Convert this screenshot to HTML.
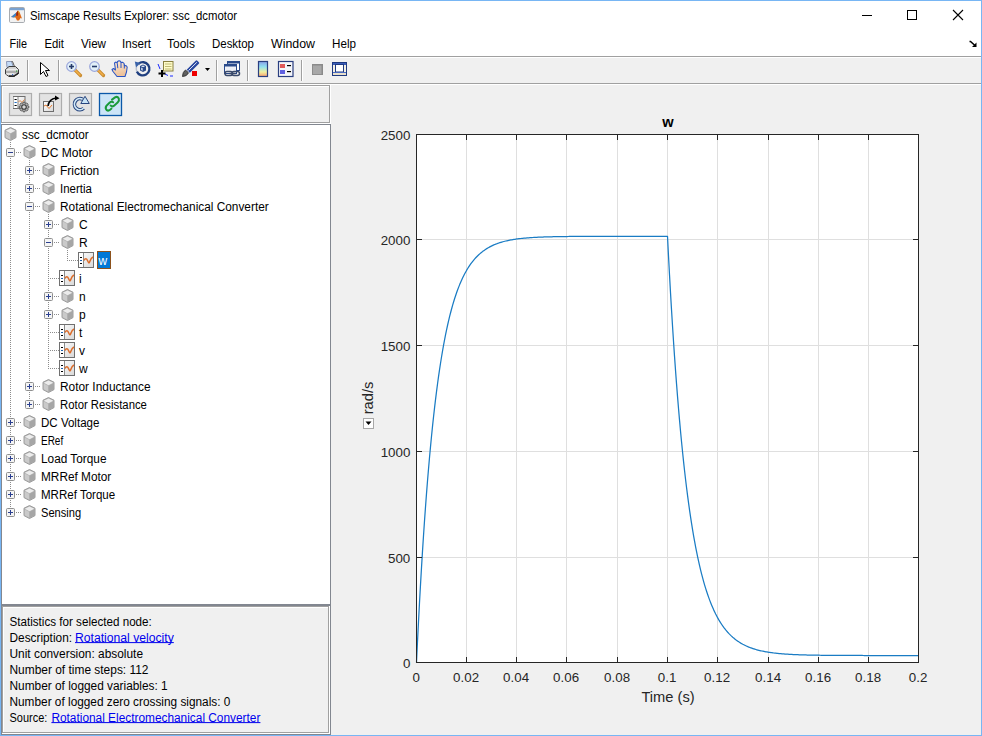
<!DOCTYPE html>
<html><head><meta charset="utf-8"><style>
html,body{margin:0;padding:0;width:982px;height:736px;overflow:hidden;background:#fff;}
svg{display:block;}
text{font-family:"Liberation Sans",sans-serif;}
</style></head><body>
<svg width="982" height="736" viewBox="0 0 982 736">
<rect x="0" y="0" width="982" height="736" fill="#ffffff" />
<g>
<rect x="9.5" y="7.5" width="15" height="15" fill="#f2f2f2" stroke="#a7abb0" stroke-width="1" rx="1.2"/>
<rect x="10" y="8" width="14" height="2.2" fill="#7aa2d0" />
<path d="M11,17 L14.5,14.5 L16.5,12.5 L18,10.5 L19.5,12 L21,16 L22,18.5 L20.5,18 L19,20.5 L17,20.5 L15.5,17.5 Z" fill="#e06a18"/>
<path d="M11,17 L14.5,14 L16.5,12.5 L16,15.5 L14,17.5 Z" fill="#3f86c8"/>
<path d="M16.5,12.5 L18,10.5 L18.8,13.5 L17.5,16 L16,15.5 Z" fill="#a02810"/>
<path d="M18,10.5 L19.3,12 L19,15 L18.5,13 Z" fill="#f6c628"/>
</g>
<text x="30" y="19.7" font-family="Liberation Sans" font-size="12" fill="#000" font-weight="normal" text-anchor="start" textLength="207" lengthAdjust="spacingAndGlyphs" >Simscape Results Explorer: ssc_dcmotor</text>
<rect x="862" y="15" width="10" height="1" fill="#000" />
<rect x="907.5" y="10.5" width="9" height="9" fill="none" stroke="#000" stroke-width="1"/>
<path d="M953,10 L963,20 M963,10 L953,20" stroke="#000" stroke-width="1.1"/>
<text x="9.5" y="48" font-family="Liberation Sans" font-size="12" fill="#000" font-weight="normal" text-anchor="start" textLength="17.5" lengthAdjust="spacingAndGlyphs" >File</text>
<text x="44.5" y="48" font-family="Liberation Sans" font-size="12" fill="#000" font-weight="normal" text-anchor="start" textLength="19.5" lengthAdjust="spacingAndGlyphs" >Edit</text>
<text x="81" y="48" font-family="Liberation Sans" font-size="12" fill="#000" font-weight="normal" text-anchor="start" textLength="25" lengthAdjust="spacingAndGlyphs" >View</text>
<text x="122" y="48" font-family="Liberation Sans" font-size="12" fill="#000" font-weight="normal" text-anchor="start" textLength="29" lengthAdjust="spacingAndGlyphs" >Insert</text>
<text x="167" y="48" font-family="Liberation Sans" font-size="12" fill="#000" font-weight="normal" text-anchor="start" textLength="28" lengthAdjust="spacingAndGlyphs" >Tools</text>
<text x="212" y="48" font-family="Liberation Sans" font-size="12" fill="#000" font-weight="normal" text-anchor="start" textLength="42" lengthAdjust="spacingAndGlyphs" >Desktop</text>
<text x="271" y="48" font-family="Liberation Sans" font-size="12" fill="#000" font-weight="normal" text-anchor="start" textLength="44" lengthAdjust="spacingAndGlyphs" >Window</text>
<text x="332" y="48" font-family="Liberation Sans" font-size="12" fill="#000" font-weight="normal" text-anchor="start" textLength="24" lengthAdjust="spacingAndGlyphs" >Help</text>
<path d="M969.5,41.5 L970.5,41.5 L975,45.5" stroke="#000" stroke-width="1.5" fill="none"/>
<path d="M976.5,42.5 L976.5,47 L972,47 Z" fill="#000"/>
<rect x="1" y="56" width="980" height="1" fill="#a0a0a0" />
<rect x="1" y="57" width="980" height="1" fill="#ffffff" />
<rect x="1" y="58" width="980" height="25" fill="#f0f0f0" />
<rect x="1" y="83" width="980" height="1" fill="#a0a0a0" />
<rect x="1" y="84" width="980" height="1" fill="#ffffff" />
<rect x="27" y="60" width="1" height="21" fill="#a0a0a0" />
<rect x="28" y="60" width="1" height="21" fill="#ffffff" />
<rect x="58" y="60" width="1" height="21" fill="#a0a0a0" />
<rect x="59" y="60" width="1" height="21" fill="#ffffff" />
<rect x="216" y="60" width="1" height="21" fill="#a0a0a0" />
<rect x="217" y="60" width="1" height="21" fill="#ffffff" />
<rect x="247" y="60" width="1" height="21" fill="#a0a0a0" />
<rect x="248" y="60" width="1" height="21" fill="#ffffff" />
<rect x="301" y="60" width="1" height="21" fill="#a0a0a0" />
<rect x="302" y="60" width="1" height="21" fill="#ffffff" />
<g>
<path d="M6.5,61.5 L11.5,61.5 L13.5,67.5 L7,67.5 Z" fill="#c4dcf8" stroke="#8c98b8" stroke-width="1"/>
<path d="M11.5,61.5 L12.5,61.5 L14.5,66.5" stroke="#555" stroke-width="1" fill="none"/>
<path d="M5.5,69.5 L9,66.5 L15.5,66.5 L18.5,69.5 L18.5,73.5 L14,76.5 L9,76.5 L5.5,74 Z" fill="#d2d2d2" stroke="#3c3c3c" stroke-width="1"/>
<path d="M6.5,69.5 L17.5,69.5" stroke="#ececec" stroke-width="1.2"/>
<path d="M6,72 L18,72" stroke="#888" stroke-width="1"/>
<path d="M6.5,74 L14,74" stroke="#f4f4f4" stroke-width="1.2"/>
<path d="M9,76 L14,76 L18.5,73" stroke="#222" stroke-width="1.4" fill="none"/>
<rect x="16" y="70.5" width="1.2" height="1.2" fill="#3aaa3a"/>
<rect x="12" y="74" width="1.2" height="1.2" fill="#3a6ac0"/>
</g>
<path d="M40.5,62.5 L40.5,74.5 L43.5,71.5 L46,76.5 L48,75.5 L45.5,70.5 L49.5,70.5 Z" fill="#fff" stroke="#000" stroke-width="1"/>
<path d="M74.5,69.5 L80.5,75.5" stroke="#c88a2e" stroke-width="3.2" stroke-linecap="round"/>
<path d="M75.0,70 L80.0,75" stroke="#f3b04a" stroke-width="1.4" stroke-linecap="round"/>
<circle cx="71.5" cy="66.5" r="4.8" fill="#e2f0f8" stroke="#9aa6dc" stroke-width="1.2"/>
<path d="M69.0,66.5 L74.0,66.5" stroke="#253a6a" stroke-width="1.6"/>
<path d="M71.5,64 L71.5,69" stroke="#253a6a" stroke-width="1.6"/>
<path d="M97.5,69.5 L103.5,75.5" stroke="#c88a2e" stroke-width="3.2" stroke-linecap="round"/>
<path d="M98.0,70 L103.0,75" stroke="#f3b04a" stroke-width="1.4" stroke-linecap="round"/>
<circle cx="94.5" cy="66.5" r="4.8" fill="#e2f0f8" stroke="#9aa6dc" stroke-width="1.2"/>
<path d="M92.0,66.5 L97.0,66.5" stroke="#253a6a" stroke-width="1.6"/>
<defs><linearGradient id="skin" x1="0" y1="0" x2="0.3" y2="1"><stop offset="0" stop-color="#fdebd8"/><stop offset="1" stop-color="#eec29a"/></linearGradient></defs>
<path d="M117,76.5 L113,71.5 L112,69.5 L113.5,68.5 L115.5,70 L114.5,63 L116,62 L117.2,63.2 L117.5,61.5 L119,60.8 L120.5,61.3 L121,62.5 L122.5,62.2 L124,63.3 L124.5,65.8 L126,65.5 L127.2,67 L126.5,72 L125,76.5 Z" fill="url(#skin)" stroke="#2a55c4" stroke-width="1.05" stroke-linejoin="round"/>
<path d="M117.3,63.5 L117.8,68.2 M121,62.6 L121,68 M124.3,64.5 L124.3,68.5" stroke="#2a55c4" stroke-width="1"/>
<path d="M138.5,63.8 A6.6,6.6 0 1 1 136.8,71.5" fill="none" stroke="#1f3f80" stroke-width="2.3"/>
<path d="M136.8,71.5 A6.6,6.6 0 0 1 136.5,67" fill="none" stroke="#b8c0d0" stroke-width="1.5"/>
<path d="M134.8,61.5 L140.5,63 L136,67.5 Z" fill="#3a62a8"/>
<path d="M140,66 L143,64.5 L146,66 L146,70.5 L143,72 L140,70.5 Z" fill="#2a4a8a"/>
<path d="M141,66.3 L143,65.4 L145,66.3 L143,67.3 Z M141.2,67.5 L142.6,68.2 L142.6,70.8 L141.2,70.1 Z" fill="#dfe8f8"/>
<rect x="163.5" y="61.5" width="9.5" height="9.5" fill="#fffcc8" stroke="#8a8040" stroke-width="1"/>
<path d="M165,64 L171.5,64 M165,66.5 L171.5,66.5 M165,69 L171.5,69" stroke="#b0a860" stroke-width="0.8"/>
<path d="M158,64 L160,69 M165,74 L168,75.5 M170,76 L173,76" stroke="#1a2aff" stroke-width="1" fill="none"/>
<path d="M162,70 L162,77 M158.5,73.5 L165.5,73.5" stroke="#000" stroke-width="2"/>
<path d="M187.5,70.5 L196.5,61.5 L198,63 L189,72" stroke="#2a48a0" stroke-width="2.4" fill="#fff" stroke-linejoin="round"/>
<path d="M188.5,70.5 L196.8,62.3" stroke="#f0f4ff" stroke-width="0.9" fill="none"/>
<path d="M182.5,76.5 Q182.5,72 185.5,70 L188.5,72.8 Q187,76.5 182.5,76.5 Z" fill="#606060" stroke="#303030" stroke-width="0.9"/>
<rect x="192" y="71" width="5" height="5" fill="#ee0000" />
<path d="M205,68 L210,68 L207.5,71 Z" fill="#000"/>
<g>
<rect x="227.5" y="61.5" width="12" height="9" fill="#fff" stroke="#2a4a8a" stroke-width="1"/>
<rect x="227.5" y="61.5" width="12" height="2" fill="#2a4a8a"/>
<rect x="224.5" y="64.5" width="12" height="9" fill="#eef0f6" stroke="#2a4a8a" stroke-width="1"/>
<rect x="224.5" y="64.5" width="12" height="2" fill="#2a4a8a"/>
<rect x="225" y="71.5" width="7.5" height="4" rx="2" fill="none" stroke="#3a4a6a" stroke-width="1.5"/>
<rect x="232" y="71.5" width="7.5" height="4" rx="2" fill="none" stroke="#3a4a6a" stroke-width="1.5"/>
<path d="M229.5,73.5 L235.5,73.5" stroke="#3a4a6a" stroke-width="1.5"/>
</g>
<defs><linearGradient id="cbg" x1="0" y1="0" x2="0" y2="1">
<stop offset="0" stop-color="#8aa0e8"/><stop offset="0.35" stop-color="#90e0f0"/><stop offset="0.7" stop-color="#f0f0a0"/><stop offset="1" stop-color="#f8a070"/></linearGradient>
<linearGradient id="chartg" x1="0" y1="0" x2="1" y2="1"><stop offset="0" stop-color="#ffffff"/><stop offset="1" stop-color="#d8d8d8"/></linearGradient>
<linearGradient id="cubeL" x1="0" y1="0" x2="1" y2="0"><stop offset="0" stop-color="#c8c8c8"/><stop offset="1" stop-color="#b8b8b8"/></linearGradient>
</defs>
<rect x="258.5" y="61.5" width="9" height="15" fill="url(#cbg)" stroke="#2a3f80" stroke-width="1.2"/>
<rect x="278.5" y="61.5" width="14.5" height="15" fill="#f4f6fa" stroke="#2a3f80" stroke-width="1.2"/>
<rect x="280" y="64" width="5" height="4" fill="#e05a5a" />
<rect x="280" y="70" width="5" height="4" fill="#6060e0" />
<rect x="287" y="65" width="4" height="1.2" fill="#000" />
<rect x="287" y="71" width="4" height="1.2" fill="#000" />
<rect x="312.5" y="64.5" width="10" height="10" fill="#a8a8a8" stroke="#8c8c8c" stroke-width="1"/>
<rect x="313" y="64" width="10" height="1.5" fill="#8a8a8a" />
<rect x="321.5" y="64" width="1.5" height="10.5" fill="#8a8a8a" />
<rect x="332.5" y="62.5" width="14" height="13" fill="#f4f0e4" stroke="#1f3a80" stroke-width="1"/>
<rect x="333" y="63" width="13" height="2" fill="#3d5eb8" />
<rect x="335.5" y="64.5" width="8" height="7.5" fill="#fff" stroke="#1f3a80" stroke-width="1"/>
<rect x="333" y="72" width="13" height="1" fill="#4a6ac0" />
<rect x="333" y="73" width="13" height="2" fill="#e8e0cc" />
<rect x="1" y="85" width="329" height="38" fill="#f0f0f0" />
<rect x="1" y="85" width="329" height="1" fill="#a0a0a0" />
<rect x="1" y="85" width="1" height="38" fill="#a0a0a0" />
<rect x="329" y="85" width="1" height="38" fill="#a0a0a0" />
<rect x="1" y="122" width="329" height="1" fill="#a0a0a0" />
<rect x="2" y="86" width="327" height="1" fill="#ffffff" />
<rect x="2" y="86" width="1" height="36" fill="#ffffff" />
<rect x="330" y="85" width="1" height="39" fill="#ffffff" />
<rect x="1" y="123" width="330" height="1" fill="#ffffff" />
<rect x="331" y="85" width="650" height="650" fill="#f0f0f0" />
<rect x="9.5" y="93.5" width="22" height="22" fill="#e3e3e3" stroke="#adadad" stroke-width="1.2"/>
<rect x="39.5" y="93.5" width="22" height="22" fill="#e3e3e3" stroke="#adadad" stroke-width="1.2"/>
<rect x="69.5" y="93.5" width="22" height="22" fill="#e3e3e3" stroke="#adadad" stroke-width="1.2"/>
<rect x="99.5" y="93.5" width="22" height="22" fill="#cce4f7" stroke="#0a58a8" stroke-width="1.3"/>
<rect x="13.5" y="96.5" width="11.5" height="12" fill="url(#chartg)" stroke="#6e6e6e" stroke-width="1"/>
<rect x="13.5" y="97" width="4" height="11" fill="#ffffff" />
<rect x="17.5" y="97" width="1" height="11.5" fill="#8a8a8a" />
<rect x="14.5" y="99" width="2.2" height="1" fill="#000" />
<rect x="14.5" y="102" width="2.2" height="1" fill="#1a6ac0" />
<rect x="14.5" y="105" width="2.2" height="1" fill="#000" />
<path d="M18.5,102 L20,100.5 L22,102.5 L24.5,99.5" stroke="#e07a30" stroke-width="0.9" fill="none"/>
<polygon points="27.51,105.84 28.80,106.03 28.80,107.97 27.51,108.16 27.31,108.66 28.08,109.71 26.71,111.08 25.66,110.31 25.16,110.51 24.97,111.80 23.03,111.80 22.84,110.51 22.34,110.31 21.29,111.08 19.92,109.71 20.69,108.66 20.49,108.16 19.20,107.97 19.20,106.03 20.49,105.84 20.69,105.34 19.92,104.29 21.29,102.92 22.34,103.69 22.84,103.49 23.03,102.20 24.97,102.20 25.16,103.49 25.66,103.69 26.71,102.92 28.08,104.29 27.31,105.34" fill="#b4b4b4" stroke="#505050" stroke-width="0.9" stroke-linejoin="round"/>
<circle cx="24" cy="107" r="2.3" fill="#d8d8d8" stroke="#3a3a3a" stroke-width="1.1"/>
<rect x="43.5" y="101.5" width="10" height="10" fill="url(#chartg)" stroke="#6e6e6e" stroke-width="1"/>
<path d="M44,106 L46,105 L49,108.5 L52,105" stroke="#e07a30" stroke-width="1" fill="none"/>
<path d="M48,106 Q49,99 56,98" stroke="#000" stroke-width="1.6" fill="none"/>
<path d="M55,95.5 L59.5,98.3 L55,100.5 Z" fill="#000"/>
<path d="M82.6,99.3 A5.4,5.6 0 1 0 83.6,108.2" fill="none" stroke="#27457e" stroke-width="3.6"/>
<path d="M82.6,99.3 A5.4,5.6 0 1 0 83.6,108.2" fill="none" stroke="#d2eaf8" stroke-width="1.7"/>
<path d="M85,96.3 L89.3,103.5 L80.8,103.5 Z" fill="#c8e4f6" stroke="#27457e" stroke-width="1" stroke-linejoin="round"/>
<path d="M112,99.6 L115,97.4 Q117.4,96 118.8,98.4 Q119.6,100.4 117.6,102.6 L113.8,105.9 Q112.2,107 110.6,105.6" stroke="#1a9a3a" stroke-width="2" fill="none" stroke-linecap="round"/>
<path d="M113.2,102.3 Q111.5,100.9 109.5,102.7 L106.4,105.9 Q104.8,108.4 106.8,110.2 Q108.8,111.5 111.4,108.6" stroke="#1a9a3a" stroke-width="2" fill="none" stroke-linecap="round"/>
<rect x="1" y="124" width="330" height="611" fill="#828790" />
<rect x="2" y="125" width="328" height="479" fill="#ffffff" />
<rect x="2" y="606" width="327" height="128" fill="#f0f0f0" />
<rect x="2" y="606" width="327" height="1" fill="#a0a0a0" />
<rect x="2" y="606" width="1" height="127" fill="#a0a0a0" />
<rect x="328" y="606" width="1" height="127" fill="#a0a0a0" />
<rect x="2" y="732" width="327" height="1" fill="#a0a0a0" />
<rect x="3" y="607" width="325" height="1" fill="#ffffff" />
<rect x="3" y="607" width="1" height="125" fill="#ffffff" />
<rect x="329" y="606" width="1" height="128" fill="#ffffff" />
<rect x="2" y="733" width="328" height="1" fill="#ffffff" />
<rect x="10" y="142" width="1" height="1" fill="#8c8c8c" />
<rect x="10" y="144" width="1" height="1" fill="#8c8c8c" />
<rect x="10" y="146" width="1" height="1" fill="#8c8c8c" />
<rect x="10" y="148" width="1" height="1" fill="#8c8c8c" />
<rect x="10" y="150" width="1" height="1" fill="#8c8c8c" />
<rect x="10" y="152" width="1" height="1" fill="#8c8c8c" />
<rect x="10" y="154" width="1" height="1" fill="#8c8c8c" />
<rect x="10" y="156" width="1" height="1" fill="#8c8c8c" />
<rect x="10" y="158" width="1" height="1" fill="#8c8c8c" />
<rect x="10" y="160" width="1" height="1" fill="#8c8c8c" />
<rect x="10" y="162" width="1" height="1" fill="#8c8c8c" />
<rect x="10" y="164" width="1" height="1" fill="#8c8c8c" />
<rect x="10" y="166" width="1" height="1" fill="#8c8c8c" />
<rect x="10" y="168" width="1" height="1" fill="#8c8c8c" />
<rect x="10" y="170" width="1" height="1" fill="#8c8c8c" />
<rect x="10" y="172" width="1" height="1" fill="#8c8c8c" />
<rect x="10" y="174" width="1" height="1" fill="#8c8c8c" />
<rect x="10" y="176" width="1" height="1" fill="#8c8c8c" />
<rect x="10" y="178" width="1" height="1" fill="#8c8c8c" />
<rect x="10" y="180" width="1" height="1" fill="#8c8c8c" />
<rect x="10" y="182" width="1" height="1" fill="#8c8c8c" />
<rect x="10" y="184" width="1" height="1" fill="#8c8c8c" />
<rect x="10" y="186" width="1" height="1" fill="#8c8c8c" />
<rect x="10" y="188" width="1" height="1" fill="#8c8c8c" />
<rect x="10" y="190" width="1" height="1" fill="#8c8c8c" />
<rect x="10" y="192" width="1" height="1" fill="#8c8c8c" />
<rect x="10" y="194" width="1" height="1" fill="#8c8c8c" />
<rect x="10" y="196" width="1" height="1" fill="#8c8c8c" />
<rect x="10" y="198" width="1" height="1" fill="#8c8c8c" />
<rect x="10" y="200" width="1" height="1" fill="#8c8c8c" />
<rect x="10" y="202" width="1" height="1" fill="#8c8c8c" />
<rect x="10" y="204" width="1" height="1" fill="#8c8c8c" />
<rect x="10" y="206" width="1" height="1" fill="#8c8c8c" />
<rect x="10" y="208" width="1" height="1" fill="#8c8c8c" />
<rect x="10" y="210" width="1" height="1" fill="#8c8c8c" />
<rect x="10" y="212" width="1" height="1" fill="#8c8c8c" />
<rect x="10" y="214" width="1" height="1" fill="#8c8c8c" />
<rect x="10" y="216" width="1" height="1" fill="#8c8c8c" />
<rect x="10" y="218" width="1" height="1" fill="#8c8c8c" />
<rect x="10" y="220" width="1" height="1" fill="#8c8c8c" />
<rect x="10" y="222" width="1" height="1" fill="#8c8c8c" />
<rect x="10" y="224" width="1" height="1" fill="#8c8c8c" />
<rect x="10" y="226" width="1" height="1" fill="#8c8c8c" />
<rect x="10" y="228" width="1" height="1" fill="#8c8c8c" />
<rect x="10" y="230" width="1" height="1" fill="#8c8c8c" />
<rect x="10" y="232" width="1" height="1" fill="#8c8c8c" />
<rect x="10" y="234" width="1" height="1" fill="#8c8c8c" />
<rect x="10" y="236" width="1" height="1" fill="#8c8c8c" />
<rect x="10" y="238" width="1" height="1" fill="#8c8c8c" />
<rect x="10" y="240" width="1" height="1" fill="#8c8c8c" />
<rect x="10" y="242" width="1" height="1" fill="#8c8c8c" />
<rect x="10" y="244" width="1" height="1" fill="#8c8c8c" />
<rect x="10" y="246" width="1" height="1" fill="#8c8c8c" />
<rect x="10" y="248" width="1" height="1" fill="#8c8c8c" />
<rect x="10" y="250" width="1" height="1" fill="#8c8c8c" />
<rect x="10" y="252" width="1" height="1" fill="#8c8c8c" />
<rect x="10" y="254" width="1" height="1" fill="#8c8c8c" />
<rect x="10" y="256" width="1" height="1" fill="#8c8c8c" />
<rect x="10" y="258" width="1" height="1" fill="#8c8c8c" />
<rect x="10" y="260" width="1" height="1" fill="#8c8c8c" />
<rect x="10" y="262" width="1" height="1" fill="#8c8c8c" />
<rect x="10" y="264" width="1" height="1" fill="#8c8c8c" />
<rect x="10" y="266" width="1" height="1" fill="#8c8c8c" />
<rect x="10" y="268" width="1" height="1" fill="#8c8c8c" />
<rect x="10" y="270" width="1" height="1" fill="#8c8c8c" />
<rect x="10" y="272" width="1" height="1" fill="#8c8c8c" />
<rect x="10" y="274" width="1" height="1" fill="#8c8c8c" />
<rect x="10" y="276" width="1" height="1" fill="#8c8c8c" />
<rect x="10" y="278" width="1" height="1" fill="#8c8c8c" />
<rect x="10" y="280" width="1" height="1" fill="#8c8c8c" />
<rect x="10" y="282" width="1" height="1" fill="#8c8c8c" />
<rect x="10" y="284" width="1" height="1" fill="#8c8c8c" />
<rect x="10" y="286" width="1" height="1" fill="#8c8c8c" />
<rect x="10" y="288" width="1" height="1" fill="#8c8c8c" />
<rect x="10" y="290" width="1" height="1" fill="#8c8c8c" />
<rect x="10" y="292" width="1" height="1" fill="#8c8c8c" />
<rect x="10" y="294" width="1" height="1" fill="#8c8c8c" />
<rect x="10" y="296" width="1" height="1" fill="#8c8c8c" />
<rect x="10" y="298" width="1" height="1" fill="#8c8c8c" />
<rect x="10" y="300" width="1" height="1" fill="#8c8c8c" />
<rect x="10" y="302" width="1" height="1" fill="#8c8c8c" />
<rect x="10" y="304" width="1" height="1" fill="#8c8c8c" />
<rect x="10" y="306" width="1" height="1" fill="#8c8c8c" />
<rect x="10" y="308" width="1" height="1" fill="#8c8c8c" />
<rect x="10" y="310" width="1" height="1" fill="#8c8c8c" />
<rect x="10" y="312" width="1" height="1" fill="#8c8c8c" />
<rect x="10" y="314" width="1" height="1" fill="#8c8c8c" />
<rect x="10" y="316" width="1" height="1" fill="#8c8c8c" />
<rect x="10" y="318" width="1" height="1" fill="#8c8c8c" />
<rect x="10" y="320" width="1" height="1" fill="#8c8c8c" />
<rect x="10" y="322" width="1" height="1" fill="#8c8c8c" />
<rect x="10" y="324" width="1" height="1" fill="#8c8c8c" />
<rect x="10" y="326" width="1" height="1" fill="#8c8c8c" />
<rect x="10" y="328" width="1" height="1" fill="#8c8c8c" />
<rect x="10" y="330" width="1" height="1" fill="#8c8c8c" />
<rect x="10" y="332" width="1" height="1" fill="#8c8c8c" />
<rect x="10" y="334" width="1" height="1" fill="#8c8c8c" />
<rect x="10" y="336" width="1" height="1" fill="#8c8c8c" />
<rect x="10" y="338" width="1" height="1" fill="#8c8c8c" />
<rect x="10" y="340" width="1" height="1" fill="#8c8c8c" />
<rect x="10" y="342" width="1" height="1" fill="#8c8c8c" />
<rect x="10" y="344" width="1" height="1" fill="#8c8c8c" />
<rect x="10" y="346" width="1" height="1" fill="#8c8c8c" />
<rect x="10" y="348" width="1" height="1" fill="#8c8c8c" />
<rect x="10" y="350" width="1" height="1" fill="#8c8c8c" />
<rect x="10" y="352" width="1" height="1" fill="#8c8c8c" />
<rect x="10" y="354" width="1" height="1" fill="#8c8c8c" />
<rect x="10" y="356" width="1" height="1" fill="#8c8c8c" />
<rect x="10" y="358" width="1" height="1" fill="#8c8c8c" />
<rect x="10" y="360" width="1" height="1" fill="#8c8c8c" />
<rect x="10" y="362" width="1" height="1" fill="#8c8c8c" />
<rect x="10" y="364" width="1" height="1" fill="#8c8c8c" />
<rect x="10" y="366" width="1" height="1" fill="#8c8c8c" />
<rect x="10" y="368" width="1" height="1" fill="#8c8c8c" />
<rect x="10" y="370" width="1" height="1" fill="#8c8c8c" />
<rect x="10" y="372" width="1" height="1" fill="#8c8c8c" />
<rect x="10" y="374" width="1" height="1" fill="#8c8c8c" />
<rect x="10" y="376" width="1" height="1" fill="#8c8c8c" />
<rect x="10" y="378" width="1" height="1" fill="#8c8c8c" />
<rect x="10" y="380" width="1" height="1" fill="#8c8c8c" />
<rect x="10" y="382" width="1" height="1" fill="#8c8c8c" />
<rect x="10" y="384" width="1" height="1" fill="#8c8c8c" />
<rect x="10" y="386" width="1" height="1" fill="#8c8c8c" />
<rect x="10" y="388" width="1" height="1" fill="#8c8c8c" />
<rect x="10" y="390" width="1" height="1" fill="#8c8c8c" />
<rect x="10" y="392" width="1" height="1" fill="#8c8c8c" />
<rect x="10" y="394" width="1" height="1" fill="#8c8c8c" />
<rect x="10" y="396" width="1" height="1" fill="#8c8c8c" />
<rect x="10" y="398" width="1" height="1" fill="#8c8c8c" />
<rect x="10" y="400" width="1" height="1" fill="#8c8c8c" />
<rect x="10" y="402" width="1" height="1" fill="#8c8c8c" />
<rect x="10" y="404" width="1" height="1" fill="#8c8c8c" />
<rect x="10" y="406" width="1" height="1" fill="#8c8c8c" />
<rect x="10" y="408" width="1" height="1" fill="#8c8c8c" />
<rect x="10" y="410" width="1" height="1" fill="#8c8c8c" />
<rect x="10" y="412" width="1" height="1" fill="#8c8c8c" />
<rect x="10" y="414" width="1" height="1" fill="#8c8c8c" />
<rect x="10" y="416" width="1" height="1" fill="#8c8c8c" />
<rect x="10" y="418" width="1" height="1" fill="#8c8c8c" />
<rect x="10" y="420" width="1" height="1" fill="#8c8c8c" />
<rect x="10" y="422" width="1" height="1" fill="#8c8c8c" />
<rect x="10" y="424" width="1" height="1" fill="#8c8c8c" />
<rect x="10" y="426" width="1" height="1" fill="#8c8c8c" />
<rect x="10" y="428" width="1" height="1" fill="#8c8c8c" />
<rect x="10" y="430" width="1" height="1" fill="#8c8c8c" />
<rect x="10" y="432" width="1" height="1" fill="#8c8c8c" />
<rect x="10" y="434" width="1" height="1" fill="#8c8c8c" />
<rect x="10" y="436" width="1" height="1" fill="#8c8c8c" />
<rect x="10" y="438" width="1" height="1" fill="#8c8c8c" />
<rect x="10" y="440" width="1" height="1" fill="#8c8c8c" />
<rect x="10" y="442" width="1" height="1" fill="#8c8c8c" />
<rect x="10" y="444" width="1" height="1" fill="#8c8c8c" />
<rect x="10" y="446" width="1" height="1" fill="#8c8c8c" />
<rect x="10" y="448" width="1" height="1" fill="#8c8c8c" />
<rect x="10" y="450" width="1" height="1" fill="#8c8c8c" />
<rect x="10" y="452" width="1" height="1" fill="#8c8c8c" />
<rect x="10" y="454" width="1" height="1" fill="#8c8c8c" />
<rect x="10" y="456" width="1" height="1" fill="#8c8c8c" />
<rect x="10" y="458" width="1" height="1" fill="#8c8c8c" />
<rect x="10" y="460" width="1" height="1" fill="#8c8c8c" />
<rect x="10" y="462" width="1" height="1" fill="#8c8c8c" />
<rect x="10" y="464" width="1" height="1" fill="#8c8c8c" />
<rect x="10" y="466" width="1" height="1" fill="#8c8c8c" />
<rect x="10" y="468" width="1" height="1" fill="#8c8c8c" />
<rect x="10" y="470" width="1" height="1" fill="#8c8c8c" />
<rect x="10" y="472" width="1" height="1" fill="#8c8c8c" />
<rect x="10" y="474" width="1" height="1" fill="#8c8c8c" />
<rect x="10" y="476" width="1" height="1" fill="#8c8c8c" />
<rect x="10" y="478" width="1" height="1" fill="#8c8c8c" />
<rect x="10" y="480" width="1" height="1" fill="#8c8c8c" />
<rect x="10" y="482" width="1" height="1" fill="#8c8c8c" />
<rect x="10" y="484" width="1" height="1" fill="#8c8c8c" />
<rect x="10" y="486" width="1" height="1" fill="#8c8c8c" />
<rect x="10" y="488" width="1" height="1" fill="#8c8c8c" />
<rect x="10" y="490" width="1" height="1" fill="#8c8c8c" />
<rect x="10" y="492" width="1" height="1" fill="#8c8c8c" />
<rect x="10" y="494" width="1" height="1" fill="#8c8c8c" />
<rect x="10" y="496" width="1" height="1" fill="#8c8c8c" />
<rect x="10" y="498" width="1" height="1" fill="#8c8c8c" />
<rect x="10" y="500" width="1" height="1" fill="#8c8c8c" />
<rect x="10" y="502" width="1" height="1" fill="#8c8c8c" />
<rect x="10" y="504" width="1" height="1" fill="#8c8c8c" />
<rect x="10" y="506" width="1" height="1" fill="#8c8c8c" />
<rect x="10" y="508" width="1" height="1" fill="#8c8c8c" />
<rect x="10" y="510" width="1" height="1" fill="#8c8c8c" />
<rect x="10" y="512" width="1" height="1" fill="#8c8c8c" />
<rect x="29" y="160" width="1" height="1" fill="#8c8c8c" />
<rect x="29" y="162" width="1" height="1" fill="#8c8c8c" />
<rect x="29" y="164" width="1" height="1" fill="#8c8c8c" />
<rect x="29" y="166" width="1" height="1" fill="#8c8c8c" />
<rect x="29" y="168" width="1" height="1" fill="#8c8c8c" />
<rect x="29" y="170" width="1" height="1" fill="#8c8c8c" />
<rect x="29" y="172" width="1" height="1" fill="#8c8c8c" />
<rect x="29" y="174" width="1" height="1" fill="#8c8c8c" />
<rect x="29" y="176" width="1" height="1" fill="#8c8c8c" />
<rect x="29" y="178" width="1" height="1" fill="#8c8c8c" />
<rect x="29" y="180" width="1" height="1" fill="#8c8c8c" />
<rect x="29" y="182" width="1" height="1" fill="#8c8c8c" />
<rect x="29" y="184" width="1" height="1" fill="#8c8c8c" />
<rect x="29" y="186" width="1" height="1" fill="#8c8c8c" />
<rect x="29" y="188" width="1" height="1" fill="#8c8c8c" />
<rect x="29" y="190" width="1" height="1" fill="#8c8c8c" />
<rect x="29" y="192" width="1" height="1" fill="#8c8c8c" />
<rect x="29" y="194" width="1" height="1" fill="#8c8c8c" />
<rect x="29" y="196" width="1" height="1" fill="#8c8c8c" />
<rect x="29" y="198" width="1" height="1" fill="#8c8c8c" />
<rect x="29" y="200" width="1" height="1" fill="#8c8c8c" />
<rect x="29" y="202" width="1" height="1" fill="#8c8c8c" />
<rect x="29" y="204" width="1" height="1" fill="#8c8c8c" />
<rect x="29" y="206" width="1" height="1" fill="#8c8c8c" />
<rect x="29" y="208" width="1" height="1" fill="#8c8c8c" />
<rect x="29" y="210" width="1" height="1" fill="#8c8c8c" />
<rect x="29" y="212" width="1" height="1" fill="#8c8c8c" />
<rect x="29" y="214" width="1" height="1" fill="#8c8c8c" />
<rect x="29" y="216" width="1" height="1" fill="#8c8c8c" />
<rect x="29" y="218" width="1" height="1" fill="#8c8c8c" />
<rect x="29" y="220" width="1" height="1" fill="#8c8c8c" />
<rect x="29" y="222" width="1" height="1" fill="#8c8c8c" />
<rect x="29" y="224" width="1" height="1" fill="#8c8c8c" />
<rect x="29" y="226" width="1" height="1" fill="#8c8c8c" />
<rect x="29" y="228" width="1" height="1" fill="#8c8c8c" />
<rect x="29" y="230" width="1" height="1" fill="#8c8c8c" />
<rect x="29" y="232" width="1" height="1" fill="#8c8c8c" />
<rect x="29" y="234" width="1" height="1" fill="#8c8c8c" />
<rect x="29" y="236" width="1" height="1" fill="#8c8c8c" />
<rect x="29" y="238" width="1" height="1" fill="#8c8c8c" />
<rect x="29" y="240" width="1" height="1" fill="#8c8c8c" />
<rect x="29" y="242" width="1" height="1" fill="#8c8c8c" />
<rect x="29" y="244" width="1" height="1" fill="#8c8c8c" />
<rect x="29" y="246" width="1" height="1" fill="#8c8c8c" />
<rect x="29" y="248" width="1" height="1" fill="#8c8c8c" />
<rect x="29" y="250" width="1" height="1" fill="#8c8c8c" />
<rect x="29" y="252" width="1" height="1" fill="#8c8c8c" />
<rect x="29" y="254" width="1" height="1" fill="#8c8c8c" />
<rect x="29" y="256" width="1" height="1" fill="#8c8c8c" />
<rect x="29" y="258" width="1" height="1" fill="#8c8c8c" />
<rect x="29" y="260" width="1" height="1" fill="#8c8c8c" />
<rect x="29" y="262" width="1" height="1" fill="#8c8c8c" />
<rect x="29" y="264" width="1" height="1" fill="#8c8c8c" />
<rect x="29" y="266" width="1" height="1" fill="#8c8c8c" />
<rect x="29" y="268" width="1" height="1" fill="#8c8c8c" />
<rect x="29" y="270" width="1" height="1" fill="#8c8c8c" />
<rect x="29" y="272" width="1" height="1" fill="#8c8c8c" />
<rect x="29" y="274" width="1" height="1" fill="#8c8c8c" />
<rect x="29" y="276" width="1" height="1" fill="#8c8c8c" />
<rect x="29" y="278" width="1" height="1" fill="#8c8c8c" />
<rect x="29" y="280" width="1" height="1" fill="#8c8c8c" />
<rect x="29" y="282" width="1" height="1" fill="#8c8c8c" />
<rect x="29" y="284" width="1" height="1" fill="#8c8c8c" />
<rect x="29" y="286" width="1" height="1" fill="#8c8c8c" />
<rect x="29" y="288" width="1" height="1" fill="#8c8c8c" />
<rect x="29" y="290" width="1" height="1" fill="#8c8c8c" />
<rect x="29" y="292" width="1" height="1" fill="#8c8c8c" />
<rect x="29" y="294" width="1" height="1" fill="#8c8c8c" />
<rect x="29" y="296" width="1" height="1" fill="#8c8c8c" />
<rect x="29" y="298" width="1" height="1" fill="#8c8c8c" />
<rect x="29" y="300" width="1" height="1" fill="#8c8c8c" />
<rect x="29" y="302" width="1" height="1" fill="#8c8c8c" />
<rect x="29" y="304" width="1" height="1" fill="#8c8c8c" />
<rect x="29" y="306" width="1" height="1" fill="#8c8c8c" />
<rect x="29" y="308" width="1" height="1" fill="#8c8c8c" />
<rect x="29" y="310" width="1" height="1" fill="#8c8c8c" />
<rect x="29" y="312" width="1" height="1" fill="#8c8c8c" />
<rect x="29" y="314" width="1" height="1" fill="#8c8c8c" />
<rect x="29" y="316" width="1" height="1" fill="#8c8c8c" />
<rect x="29" y="318" width="1" height="1" fill="#8c8c8c" />
<rect x="29" y="320" width="1" height="1" fill="#8c8c8c" />
<rect x="29" y="322" width="1" height="1" fill="#8c8c8c" />
<rect x="29" y="324" width="1" height="1" fill="#8c8c8c" />
<rect x="29" y="326" width="1" height="1" fill="#8c8c8c" />
<rect x="29" y="328" width="1" height="1" fill="#8c8c8c" />
<rect x="29" y="330" width="1" height="1" fill="#8c8c8c" />
<rect x="29" y="332" width="1" height="1" fill="#8c8c8c" />
<rect x="29" y="334" width="1" height="1" fill="#8c8c8c" />
<rect x="29" y="336" width="1" height="1" fill="#8c8c8c" />
<rect x="29" y="338" width="1" height="1" fill="#8c8c8c" />
<rect x="29" y="340" width="1" height="1" fill="#8c8c8c" />
<rect x="29" y="342" width="1" height="1" fill="#8c8c8c" />
<rect x="29" y="344" width="1" height="1" fill="#8c8c8c" />
<rect x="29" y="346" width="1" height="1" fill="#8c8c8c" />
<rect x="29" y="348" width="1" height="1" fill="#8c8c8c" />
<rect x="29" y="350" width="1" height="1" fill="#8c8c8c" />
<rect x="29" y="352" width="1" height="1" fill="#8c8c8c" />
<rect x="29" y="354" width="1" height="1" fill="#8c8c8c" />
<rect x="29" y="356" width="1" height="1" fill="#8c8c8c" />
<rect x="29" y="358" width="1" height="1" fill="#8c8c8c" />
<rect x="29" y="360" width="1" height="1" fill="#8c8c8c" />
<rect x="29" y="362" width="1" height="1" fill="#8c8c8c" />
<rect x="29" y="364" width="1" height="1" fill="#8c8c8c" />
<rect x="29" y="366" width="1" height="1" fill="#8c8c8c" />
<rect x="29" y="368" width="1" height="1" fill="#8c8c8c" />
<rect x="29" y="370" width="1" height="1" fill="#8c8c8c" />
<rect x="29" y="372" width="1" height="1" fill="#8c8c8c" />
<rect x="29" y="374" width="1" height="1" fill="#8c8c8c" />
<rect x="29" y="376" width="1" height="1" fill="#8c8c8c" />
<rect x="29" y="378" width="1" height="1" fill="#8c8c8c" />
<rect x="29" y="380" width="1" height="1" fill="#8c8c8c" />
<rect x="29" y="382" width="1" height="1" fill="#8c8c8c" />
<rect x="29" y="384" width="1" height="1" fill="#8c8c8c" />
<rect x="29" y="386" width="1" height="1" fill="#8c8c8c" />
<rect x="29" y="388" width="1" height="1" fill="#8c8c8c" />
<rect x="29" y="390" width="1" height="1" fill="#8c8c8c" />
<rect x="29" y="392" width="1" height="1" fill="#8c8c8c" />
<rect x="29" y="394" width="1" height="1" fill="#8c8c8c" />
<rect x="29" y="396" width="1" height="1" fill="#8c8c8c" />
<rect x="29" y="398" width="1" height="1" fill="#8c8c8c" />
<rect x="29" y="400" width="1" height="1" fill="#8c8c8c" />
<rect x="29" y="402" width="1" height="1" fill="#8c8c8c" />
<rect x="29" y="404" width="1" height="1" fill="#8c8c8c" />
<rect x="48" y="214" width="1" height="1" fill="#8c8c8c" />
<rect x="48" y="216" width="1" height="1" fill="#8c8c8c" />
<rect x="48" y="218" width="1" height="1" fill="#8c8c8c" />
<rect x="48" y="220" width="1" height="1" fill="#8c8c8c" />
<rect x="48" y="222" width="1" height="1" fill="#8c8c8c" />
<rect x="48" y="224" width="1" height="1" fill="#8c8c8c" />
<rect x="48" y="226" width="1" height="1" fill="#8c8c8c" />
<rect x="48" y="228" width="1" height="1" fill="#8c8c8c" />
<rect x="48" y="230" width="1" height="1" fill="#8c8c8c" />
<rect x="48" y="232" width="1" height="1" fill="#8c8c8c" />
<rect x="48" y="234" width="1" height="1" fill="#8c8c8c" />
<rect x="48" y="236" width="1" height="1" fill="#8c8c8c" />
<rect x="48" y="238" width="1" height="1" fill="#8c8c8c" />
<rect x="48" y="240" width="1" height="1" fill="#8c8c8c" />
<rect x="48" y="242" width="1" height="1" fill="#8c8c8c" />
<rect x="48" y="244" width="1" height="1" fill="#8c8c8c" />
<rect x="48" y="246" width="1" height="1" fill="#8c8c8c" />
<rect x="48" y="248" width="1" height="1" fill="#8c8c8c" />
<rect x="48" y="250" width="1" height="1" fill="#8c8c8c" />
<rect x="48" y="252" width="1" height="1" fill="#8c8c8c" />
<rect x="48" y="254" width="1" height="1" fill="#8c8c8c" />
<rect x="48" y="256" width="1" height="1" fill="#8c8c8c" />
<rect x="48" y="258" width="1" height="1" fill="#8c8c8c" />
<rect x="48" y="260" width="1" height="1" fill="#8c8c8c" />
<rect x="48" y="262" width="1" height="1" fill="#8c8c8c" />
<rect x="48" y="264" width="1" height="1" fill="#8c8c8c" />
<rect x="48" y="266" width="1" height="1" fill="#8c8c8c" />
<rect x="48" y="268" width="1" height="1" fill="#8c8c8c" />
<rect x="48" y="270" width="1" height="1" fill="#8c8c8c" />
<rect x="48" y="272" width="1" height="1" fill="#8c8c8c" />
<rect x="48" y="274" width="1" height="1" fill="#8c8c8c" />
<rect x="48" y="276" width="1" height="1" fill="#8c8c8c" />
<rect x="48" y="278" width="1" height="1" fill="#8c8c8c" />
<rect x="48" y="280" width="1" height="1" fill="#8c8c8c" />
<rect x="48" y="282" width="1" height="1" fill="#8c8c8c" />
<rect x="48" y="284" width="1" height="1" fill="#8c8c8c" />
<rect x="48" y="286" width="1" height="1" fill="#8c8c8c" />
<rect x="48" y="288" width="1" height="1" fill="#8c8c8c" />
<rect x="48" y="290" width="1" height="1" fill="#8c8c8c" />
<rect x="48" y="292" width="1" height="1" fill="#8c8c8c" />
<rect x="48" y="294" width="1" height="1" fill="#8c8c8c" />
<rect x="48" y="296" width="1" height="1" fill="#8c8c8c" />
<rect x="48" y="298" width="1" height="1" fill="#8c8c8c" />
<rect x="48" y="300" width="1" height="1" fill="#8c8c8c" />
<rect x="48" y="302" width="1" height="1" fill="#8c8c8c" />
<rect x="48" y="304" width="1" height="1" fill="#8c8c8c" />
<rect x="48" y="306" width="1" height="1" fill="#8c8c8c" />
<rect x="48" y="308" width="1" height="1" fill="#8c8c8c" />
<rect x="48" y="310" width="1" height="1" fill="#8c8c8c" />
<rect x="48" y="312" width="1" height="1" fill="#8c8c8c" />
<rect x="48" y="314" width="1" height="1" fill="#8c8c8c" />
<rect x="48" y="316" width="1" height="1" fill="#8c8c8c" />
<rect x="48" y="318" width="1" height="1" fill="#8c8c8c" />
<rect x="48" y="320" width="1" height="1" fill="#8c8c8c" />
<rect x="48" y="322" width="1" height="1" fill="#8c8c8c" />
<rect x="48" y="324" width="1" height="1" fill="#8c8c8c" />
<rect x="48" y="326" width="1" height="1" fill="#8c8c8c" />
<rect x="48" y="328" width="1" height="1" fill="#8c8c8c" />
<rect x="48" y="330" width="1" height="1" fill="#8c8c8c" />
<rect x="48" y="332" width="1" height="1" fill="#8c8c8c" />
<rect x="48" y="334" width="1" height="1" fill="#8c8c8c" />
<rect x="48" y="336" width="1" height="1" fill="#8c8c8c" />
<rect x="48" y="338" width="1" height="1" fill="#8c8c8c" />
<rect x="48" y="340" width="1" height="1" fill="#8c8c8c" />
<rect x="48" y="342" width="1" height="1" fill="#8c8c8c" />
<rect x="48" y="344" width="1" height="1" fill="#8c8c8c" />
<rect x="48" y="346" width="1" height="1" fill="#8c8c8c" />
<rect x="48" y="348" width="1" height="1" fill="#8c8c8c" />
<rect x="48" y="350" width="1" height="1" fill="#8c8c8c" />
<rect x="48" y="352" width="1" height="1" fill="#8c8c8c" />
<rect x="48" y="354" width="1" height="1" fill="#8c8c8c" />
<rect x="48" y="356" width="1" height="1" fill="#8c8c8c" />
<rect x="48" y="358" width="1" height="1" fill="#8c8c8c" />
<rect x="48" y="360" width="1" height="1" fill="#8c8c8c" />
<rect x="48" y="362" width="1" height="1" fill="#8c8c8c" />
<rect x="48" y="364" width="1" height="1" fill="#8c8c8c" />
<rect x="48" y="366" width="1" height="1" fill="#8c8c8c" />
<rect x="48" y="368" width="1" height="1" fill="#8c8c8c" />
<rect x="67" y="250" width="1" height="1" fill="#8c8c8c" />
<rect x="67" y="252" width="1" height="1" fill="#8c8c8c" />
<rect x="67" y="254" width="1" height="1" fill="#8c8c8c" />
<rect x="67" y="256" width="1" height="1" fill="#8c8c8c" />
<rect x="67" y="258" width="1" height="1" fill="#8c8c8c" />
<rect x="67" y="260" width="1" height="1" fill="#8c8c8c" />
<path d="M10.5,127.5 L16.0,130.2 L16.0,137.6 L10.5,140.5 L5.0,137.6 L5.0,130.2 Z" fill="#b0b0b0" stroke="#9c9c9c" stroke-width="1"/>
<path d="M10.5,128.5 L15.3,130.7 L10.5,133.2 L5.7,130.7 Z" fill="#ececec"/>
<path d="M5.7,131.4 L10.1,133.8 L10.1,139.6 L5.7,137.2 Z" fill="#cacaca"/>
<path d="M15.3,131.4 L10.9,133.8 L10.9,139.6 L15.3,137.2 Z" fill="#a6a6a6"/>
<text x="22" y="139" font-family="Liberation Sans" font-size="12" fill="#000" font-weight="normal" text-anchor="start" textLength="66.7" lengthAdjust="spacingAndGlyphs" >ssc_dcmotor</text>
<rect x="16" y="152" width="1" height="1" fill="#8c8c8c" />
<rect x="18" y="152" width="1" height="1" fill="#8c8c8c" />
<rect x="20" y="152" width="1" height="1" fill="#8c8c8c" />
<rect x="6.5" y="148.5" width="8" height="8" rx="1" fill="#f4f4f4" stroke="#8e8f8f" stroke-width="1"/>
<rect x="8" y="152" width="5" height="1" fill="#2a3f90" />
<path d="M29.5,145.5 L35.0,148.2 L35.0,155.6 L29.5,158.5 L24.0,155.6 L24.0,148.2 Z" fill="#b0b0b0" stroke="#9c9c9c" stroke-width="1"/>
<path d="M29.5,146.5 L34.3,148.7 L29.5,151.2 L24.7,148.7 Z" fill="#ececec"/>
<path d="M24.7,149.4 L29.1,151.8 L29.1,157.6 L24.7,155.2 Z" fill="#cacaca"/>
<path d="M34.3,149.4 L29.9,151.8 L29.9,157.6 L34.3,155.2 Z" fill="#a6a6a6"/>
<text x="41" y="157" font-family="Liberation Sans" font-size="12" fill="#000" font-weight="normal" text-anchor="start" textLength="51.6" lengthAdjust="spacingAndGlyphs" >DC Motor</text>
<rect x="35" y="170" width="1" height="1" fill="#8c8c8c" />
<rect x="37" y="170" width="1" height="1" fill="#8c8c8c" />
<rect x="39" y="170" width="1" height="1" fill="#8c8c8c" />
<rect x="25.5" y="166.5" width="8" height="8" rx="1" fill="#f4f4f4" stroke="#8e8f8f" stroke-width="1"/>
<rect x="27" y="170" width="5" height="1" fill="#2a3f90" />
<rect x="29" y="168" width="1" height="5" fill="#2a3f90" />
<path d="M48.5,163.5 L54.0,166.2 L54.0,173.6 L48.5,176.5 L43.0,173.6 L43.0,166.2 Z" fill="#b0b0b0" stroke="#9c9c9c" stroke-width="1"/>
<path d="M48.5,164.5 L53.3,166.7 L48.5,169.2 L43.7,166.7 Z" fill="#ececec"/>
<path d="M43.7,167.4 L48.1,169.8 L48.1,175.6 L43.7,173.2 Z" fill="#cacaca"/>
<path d="M53.3,167.4 L48.9,169.8 L48.9,175.6 L53.3,173.2 Z" fill="#a6a6a6"/>
<text x="60" y="175" font-family="Liberation Sans" font-size="12" fill="#000" font-weight="normal" text-anchor="start" textLength="39.2" lengthAdjust="spacingAndGlyphs" >Friction</text>
<rect x="35" y="188" width="1" height="1" fill="#8c8c8c" />
<rect x="37" y="188" width="1" height="1" fill="#8c8c8c" />
<rect x="39" y="188" width="1" height="1" fill="#8c8c8c" />
<rect x="25.5" y="184.5" width="8" height="8" rx="1" fill="#f4f4f4" stroke="#8e8f8f" stroke-width="1"/>
<rect x="27" y="188" width="5" height="1" fill="#2a3f90" />
<rect x="29" y="186" width="1" height="5" fill="#2a3f90" />
<path d="M48.5,181.5 L54.0,184.2 L54.0,191.6 L48.5,194.5 L43.0,191.6 L43.0,184.2 Z" fill="#b0b0b0" stroke="#9c9c9c" stroke-width="1"/>
<path d="M48.5,182.5 L53.3,184.7 L48.5,187.2 L43.7,184.7 Z" fill="#ececec"/>
<path d="M43.7,185.4 L48.1,187.8 L48.1,193.6 L43.7,191.2 Z" fill="#cacaca"/>
<path d="M53.3,185.4 L48.9,187.8 L48.9,193.6 L53.3,191.2 Z" fill="#a6a6a6"/>
<text x="60" y="193" font-family="Liberation Sans" font-size="12" fill="#000" font-weight="normal" text-anchor="start" textLength="31.8" lengthAdjust="spacingAndGlyphs" >Inertia</text>
<rect x="35" y="206" width="1" height="1" fill="#8c8c8c" />
<rect x="37" y="206" width="1" height="1" fill="#8c8c8c" />
<rect x="39" y="206" width="1" height="1" fill="#8c8c8c" />
<rect x="25.5" y="202.5" width="8" height="8" rx="1" fill="#f4f4f4" stroke="#8e8f8f" stroke-width="1"/>
<rect x="27" y="206" width="5" height="1" fill="#2a3f90" />
<path d="M48.5,199.5 L54.0,202.2 L54.0,209.6 L48.5,212.5 L43.0,209.6 L43.0,202.2 Z" fill="#b0b0b0" stroke="#9c9c9c" stroke-width="1"/>
<path d="M48.5,200.5 L53.3,202.7 L48.5,205.2 L43.7,202.7 Z" fill="#ececec"/>
<path d="M43.7,203.4 L48.1,205.8 L48.1,211.6 L43.7,209.2 Z" fill="#cacaca"/>
<path d="M53.3,203.4 L48.9,205.8 L48.9,211.6 L53.3,209.2 Z" fill="#a6a6a6"/>
<text x="60" y="211" font-family="Liberation Sans" font-size="12" fill="#000" font-weight="normal" text-anchor="start" textLength="208.7" lengthAdjust="spacingAndGlyphs" >Rotational Electromechanical Converter</text>
<rect x="54" y="224" width="1" height="1" fill="#8c8c8c" />
<rect x="56" y="224" width="1" height="1" fill="#8c8c8c" />
<rect x="58" y="224" width="1" height="1" fill="#8c8c8c" />
<rect x="44.5" y="220.5" width="8" height="8" rx="1" fill="#f4f4f4" stroke="#8e8f8f" stroke-width="1"/>
<rect x="46" y="224" width="5" height="1" fill="#2a3f90" />
<rect x="48" y="222" width="1" height="5" fill="#2a3f90" />
<path d="M67.5,217.5 L73.0,220.2 L73.0,227.6 L67.5,230.5 L62.0,227.6 L62.0,220.2 Z" fill="#b0b0b0" stroke="#9c9c9c" stroke-width="1"/>
<path d="M67.5,218.5 L72.3,220.7 L67.5,223.2 L62.7,220.7 Z" fill="#ececec"/>
<path d="M62.7,221.4 L67.1,223.8 L67.1,229.6 L62.7,227.2 Z" fill="#cacaca"/>
<path d="M72.3,221.4 L67.9,223.8 L67.9,229.6 L72.3,227.2 Z" fill="#a6a6a6"/>
<text x="79" y="229" font-family="Liberation Sans" font-size="12" fill="#000" font-weight="normal" text-anchor="start" >C</text>
<rect x="54" y="242" width="1" height="1" fill="#8c8c8c" />
<rect x="56" y="242" width="1" height="1" fill="#8c8c8c" />
<rect x="58" y="242" width="1" height="1" fill="#8c8c8c" />
<rect x="44.5" y="238.5" width="8" height="8" rx="1" fill="#f4f4f4" stroke="#8e8f8f" stroke-width="1"/>
<rect x="46" y="242" width="5" height="1" fill="#2a3f90" />
<path d="M67.5,235.5 L73.0,238.2 L73.0,245.6 L67.5,248.5 L62.0,245.6 L62.0,238.2 Z" fill="#b0b0b0" stroke="#9c9c9c" stroke-width="1"/>
<path d="M67.5,236.5 L72.3,238.7 L67.5,241.2 L62.7,238.7 Z" fill="#ececec"/>
<path d="M62.7,239.4 L67.1,241.8 L67.1,247.6 L62.7,245.2 Z" fill="#cacaca"/>
<path d="M72.3,239.4 L67.9,241.8 L67.9,247.6 L72.3,245.2 Z" fill="#a6a6a6"/>
<text x="79" y="247" font-family="Liberation Sans" font-size="12" fill="#000" font-weight="normal" text-anchor="start" >R</text>
<rect x="69" y="260" width="1" height="1" fill="#8c8c8c" />
<rect x="71" y="260" width="1" height="1" fill="#8c8c8c" />
<rect x="73" y="260" width="1" height="1" fill="#8c8c8c" />
<rect x="75" y="260" width="1" height="1" fill="#8c8c8c" />
<rect x="77" y="260" width="1" height="1" fill="#8c8c8c" />
<rect x="78.5" y="252.5" width="15" height="15" fill="url(#chartg)" stroke="#707070" stroke-width="1"/>
<rect x="79" y="253" width="5" height="14" fill="#ffffff" />
<rect x="83" y="253" width="1" height="14" fill="#8c8c8c" />
<rect x="80" y="257" width="2" height="1" fill="#000" />
<rect x="80" y="260" width="2" height="1" fill="#1e64b4" />
<rect x="80" y="263" width="2" height="1" fill="#000" />
<path d="M84,260.5 C85,258 86.5,258 87.5,260.5 S89,264 90,261 S92,257.5 93,257" stroke="#dc6c2a" stroke-width="1.5" fill="none"/>
<rect x="97" y="251" width="14" height="18" fill="#0078d7" />
<rect x="97.5" y="251.5" width="13" height="17" fill="none" stroke="#1a1a1a" stroke-width="1"/>
<rect x="97.5" y="251.5" width="13" height="17" fill="none" stroke="#ff8a20" stroke-width="1" stroke-dasharray="1,1"/>
<text x="98.5" y="265" font-family="Liberation Sans" font-size="12" fill="#ffffff" font-weight="normal" text-anchor="start" >w</text>
<rect x="50" y="278" width="1" height="1" fill="#8c8c8c" />
<rect x="52" y="278" width="1" height="1" fill="#8c8c8c" />
<rect x="54" y="278" width="1" height="1" fill="#8c8c8c" />
<rect x="56" y="278" width="1" height="1" fill="#8c8c8c" />
<rect x="58" y="278" width="1" height="1" fill="#8c8c8c" />
<rect x="59.5" y="270.5" width="15" height="15" fill="url(#chartg)" stroke="#707070" stroke-width="1"/>
<rect x="60" y="271" width="5" height="14" fill="#ffffff" />
<rect x="64" y="271" width="1" height="14" fill="#8c8c8c" />
<rect x="61" y="275" width="2" height="1" fill="#000" />
<rect x="61" y="278" width="2" height="1" fill="#1e64b4" />
<rect x="61" y="281" width="2" height="1" fill="#000" />
<path d="M65,278.5 C66,276 67.5,276 68.5,278.5 S70,282 71,279 S73,275.5 74,275" stroke="#dc6c2a" stroke-width="1.5" fill="none"/>
<text x="79" y="283" font-family="Liberation Sans" font-size="12" fill="#000" font-weight="normal" text-anchor="start" >i</text>
<rect x="54" y="296" width="1" height="1" fill="#8c8c8c" />
<rect x="56" y="296" width="1" height="1" fill="#8c8c8c" />
<rect x="58" y="296" width="1" height="1" fill="#8c8c8c" />
<rect x="44.5" y="292.5" width="8" height="8" rx="1" fill="#f4f4f4" stroke="#8e8f8f" stroke-width="1"/>
<rect x="46" y="296" width="5" height="1" fill="#2a3f90" />
<rect x="48" y="294" width="1" height="5" fill="#2a3f90" />
<path d="M67.5,289.5 L73.0,292.2 L73.0,299.6 L67.5,302.5 L62.0,299.6 L62.0,292.2 Z" fill="#b0b0b0" stroke="#9c9c9c" stroke-width="1"/>
<path d="M67.5,290.5 L72.3,292.7 L67.5,295.2 L62.7,292.7 Z" fill="#ececec"/>
<path d="M62.7,293.4 L67.1,295.8 L67.1,301.6 L62.7,299.2 Z" fill="#cacaca"/>
<path d="M72.3,293.4 L67.9,295.8 L67.9,301.6 L72.3,299.2 Z" fill="#a6a6a6"/>
<text x="79" y="301" font-family="Liberation Sans" font-size="12" fill="#000" font-weight="normal" text-anchor="start" >n</text>
<rect x="54" y="314" width="1" height="1" fill="#8c8c8c" />
<rect x="56" y="314" width="1" height="1" fill="#8c8c8c" />
<rect x="58" y="314" width="1" height="1" fill="#8c8c8c" />
<rect x="44.5" y="310.5" width="8" height="8" rx="1" fill="#f4f4f4" stroke="#8e8f8f" stroke-width="1"/>
<rect x="46" y="314" width="5" height="1" fill="#2a3f90" />
<rect x="48" y="312" width="1" height="5" fill="#2a3f90" />
<path d="M67.5,307.5 L73.0,310.2 L73.0,317.6 L67.5,320.5 L62.0,317.6 L62.0,310.2 Z" fill="#b0b0b0" stroke="#9c9c9c" stroke-width="1"/>
<path d="M67.5,308.5 L72.3,310.7 L67.5,313.2 L62.7,310.7 Z" fill="#ececec"/>
<path d="M62.7,311.4 L67.1,313.8 L67.1,319.6 L62.7,317.2 Z" fill="#cacaca"/>
<path d="M72.3,311.4 L67.9,313.8 L67.9,319.6 L72.3,317.2 Z" fill="#a6a6a6"/>
<text x="79" y="319" font-family="Liberation Sans" font-size="12" fill="#000" font-weight="normal" text-anchor="start" >p</text>
<rect x="50" y="332" width="1" height="1" fill="#8c8c8c" />
<rect x="52" y="332" width="1" height="1" fill="#8c8c8c" />
<rect x="54" y="332" width="1" height="1" fill="#8c8c8c" />
<rect x="56" y="332" width="1" height="1" fill="#8c8c8c" />
<rect x="58" y="332" width="1" height="1" fill="#8c8c8c" />
<rect x="59.5" y="324.5" width="15" height="15" fill="url(#chartg)" stroke="#707070" stroke-width="1"/>
<rect x="60" y="325" width="5" height="14" fill="#ffffff" />
<rect x="64" y="325" width="1" height="14" fill="#8c8c8c" />
<rect x="61" y="329" width="2" height="1" fill="#000" />
<rect x="61" y="332" width="2" height="1" fill="#1e64b4" />
<rect x="61" y="335" width="2" height="1" fill="#000" />
<path d="M65,332.5 C66,330 67.5,330 68.5,332.5 S70,336 71,333 S73,329.5 74,329" stroke="#dc6c2a" stroke-width="1.5" fill="none"/>
<text x="79" y="337" font-family="Liberation Sans" font-size="12" fill="#000" font-weight="normal" text-anchor="start" >t</text>
<rect x="50" y="350" width="1" height="1" fill="#8c8c8c" />
<rect x="52" y="350" width="1" height="1" fill="#8c8c8c" />
<rect x="54" y="350" width="1" height="1" fill="#8c8c8c" />
<rect x="56" y="350" width="1" height="1" fill="#8c8c8c" />
<rect x="58" y="350" width="1" height="1" fill="#8c8c8c" />
<rect x="59.5" y="342.5" width="15" height="15" fill="url(#chartg)" stroke="#707070" stroke-width="1"/>
<rect x="60" y="343" width="5" height="14" fill="#ffffff" />
<rect x="64" y="343" width="1" height="14" fill="#8c8c8c" />
<rect x="61" y="347" width="2" height="1" fill="#000" />
<rect x="61" y="350" width="2" height="1" fill="#1e64b4" />
<rect x="61" y="353" width="2" height="1" fill="#000" />
<path d="M65,350.5 C66,348 67.5,348 68.5,350.5 S70,354 71,351 S73,347.5 74,347" stroke="#dc6c2a" stroke-width="1.5" fill="none"/>
<text x="79" y="355" font-family="Liberation Sans" font-size="12" fill="#000" font-weight="normal" text-anchor="start" >v</text>
<rect x="50" y="368" width="1" height="1" fill="#8c8c8c" />
<rect x="52" y="368" width="1" height="1" fill="#8c8c8c" />
<rect x="54" y="368" width="1" height="1" fill="#8c8c8c" />
<rect x="56" y="368" width="1" height="1" fill="#8c8c8c" />
<rect x="58" y="368" width="1" height="1" fill="#8c8c8c" />
<rect x="59.5" y="360.5" width="15" height="15" fill="url(#chartg)" stroke="#707070" stroke-width="1"/>
<rect x="60" y="361" width="5" height="14" fill="#ffffff" />
<rect x="64" y="361" width="1" height="14" fill="#8c8c8c" />
<rect x="61" y="365" width="2" height="1" fill="#000" />
<rect x="61" y="368" width="2" height="1" fill="#1e64b4" />
<rect x="61" y="371" width="2" height="1" fill="#000" />
<path d="M65,368.5 C66,366 67.5,366 68.5,368.5 S70,372 71,369 S73,365.5 74,365" stroke="#dc6c2a" stroke-width="1.5" fill="none"/>
<text x="79" y="373" font-family="Liberation Sans" font-size="12" fill="#000" font-weight="normal" text-anchor="start" >w</text>
<rect x="35" y="386" width="1" height="1" fill="#8c8c8c" />
<rect x="37" y="386" width="1" height="1" fill="#8c8c8c" />
<rect x="39" y="386" width="1" height="1" fill="#8c8c8c" />
<rect x="25.5" y="382.5" width="8" height="8" rx="1" fill="#f4f4f4" stroke="#8e8f8f" stroke-width="1"/>
<rect x="27" y="386" width="5" height="1" fill="#2a3f90" />
<rect x="29" y="384" width="1" height="5" fill="#2a3f90" />
<path d="M48.5,379.5 L54.0,382.2 L54.0,389.6 L48.5,392.5 L43.0,389.6 L43.0,382.2 Z" fill="#b0b0b0" stroke="#9c9c9c" stroke-width="1"/>
<path d="M48.5,380.5 L53.3,382.7 L48.5,385.2 L43.7,382.7 Z" fill="#ececec"/>
<path d="M43.7,383.4 L48.1,385.8 L48.1,391.6 L43.7,389.2 Z" fill="#cacaca"/>
<path d="M53.3,383.4 L48.9,385.8 L48.9,391.6 L53.3,389.2 Z" fill="#a6a6a6"/>
<text x="60" y="391" font-family="Liberation Sans" font-size="12" fill="#000" font-weight="normal" text-anchor="start" textLength="90.5" lengthAdjust="spacingAndGlyphs" >Rotor Inductance</text>
<rect x="35" y="404" width="1" height="1" fill="#8c8c8c" />
<rect x="37" y="404" width="1" height="1" fill="#8c8c8c" />
<rect x="39" y="404" width="1" height="1" fill="#8c8c8c" />
<rect x="25.5" y="400.5" width="8" height="8" rx="1" fill="#f4f4f4" stroke="#8e8f8f" stroke-width="1"/>
<rect x="27" y="404" width="5" height="1" fill="#2a3f90" />
<rect x="29" y="402" width="1" height="5" fill="#2a3f90" />
<path d="M48.5,397.5 L54.0,400.2 L54.0,407.6 L48.5,410.5 L43.0,407.6 L43.0,400.2 Z" fill="#b0b0b0" stroke="#9c9c9c" stroke-width="1"/>
<path d="M48.5,398.5 L53.3,400.7 L48.5,403.2 L43.7,400.7 Z" fill="#ececec"/>
<path d="M43.7,401.4 L48.1,403.8 L48.1,409.6 L43.7,407.2 Z" fill="#cacaca"/>
<path d="M53.3,401.4 L48.9,403.8 L48.9,409.6 L53.3,407.2 Z" fill="#a6a6a6"/>
<text x="60" y="409" font-family="Liberation Sans" font-size="12" fill="#000" font-weight="normal" text-anchor="start" textLength="86.9" lengthAdjust="spacingAndGlyphs" >Rotor Resistance</text>
<rect x="16" y="422" width="1" height="1" fill="#8c8c8c" />
<rect x="18" y="422" width="1" height="1" fill="#8c8c8c" />
<rect x="20" y="422" width="1" height="1" fill="#8c8c8c" />
<rect x="6.5" y="418.5" width="8" height="8" rx="1" fill="#f4f4f4" stroke="#8e8f8f" stroke-width="1"/>
<rect x="8" y="422" width="5" height="1" fill="#2a3f90" />
<rect x="10" y="420" width="1" height="5" fill="#2a3f90" />
<path d="M29.5,415.5 L35.0,418.2 L35.0,425.6 L29.5,428.5 L24.0,425.6 L24.0,418.2 Z" fill="#b0b0b0" stroke="#9c9c9c" stroke-width="1"/>
<path d="M29.5,416.5 L34.3,418.7 L29.5,421.2 L24.7,418.7 Z" fill="#ececec"/>
<path d="M24.7,419.4 L29.1,421.8 L29.1,427.6 L24.7,425.2 Z" fill="#cacaca"/>
<path d="M34.3,419.4 L29.9,421.8 L29.9,427.6 L34.3,425.2 Z" fill="#a6a6a6"/>
<text x="41" y="427" font-family="Liberation Sans" font-size="12" fill="#000" font-weight="normal" text-anchor="start" textLength="58.4" lengthAdjust="spacingAndGlyphs" >DC Voltage</text>
<rect x="16" y="440" width="1" height="1" fill="#8c8c8c" />
<rect x="18" y="440" width="1" height="1" fill="#8c8c8c" />
<rect x="20" y="440" width="1" height="1" fill="#8c8c8c" />
<rect x="6.5" y="436.5" width="8" height="8" rx="1" fill="#f4f4f4" stroke="#8e8f8f" stroke-width="1"/>
<rect x="8" y="440" width="5" height="1" fill="#2a3f90" />
<rect x="10" y="438" width="1" height="5" fill="#2a3f90" />
<path d="M29.5,433.5 L35.0,436.2 L35.0,443.6 L29.5,446.5 L24.0,443.6 L24.0,436.2 Z" fill="#b0b0b0" stroke="#9c9c9c" stroke-width="1"/>
<path d="M29.5,434.5 L34.3,436.7 L29.5,439.2 L24.7,436.7 Z" fill="#ececec"/>
<path d="M24.7,437.4 L29.1,439.8 L29.1,445.6 L24.7,443.2 Z" fill="#cacaca"/>
<path d="M34.3,437.4 L29.9,439.8 L29.9,445.6 L34.3,443.2 Z" fill="#a6a6a6"/>
<text x="41" y="445" font-family="Liberation Sans" font-size="12" fill="#000" font-weight="normal" text-anchor="start" textLength="22.2" lengthAdjust="spacingAndGlyphs" >ERef</text>
<rect x="16" y="458" width="1" height="1" fill="#8c8c8c" />
<rect x="18" y="458" width="1" height="1" fill="#8c8c8c" />
<rect x="20" y="458" width="1" height="1" fill="#8c8c8c" />
<rect x="6.5" y="454.5" width="8" height="8" rx="1" fill="#f4f4f4" stroke="#8e8f8f" stroke-width="1"/>
<rect x="8" y="458" width="5" height="1" fill="#2a3f90" />
<rect x="10" y="456" width="1" height="5" fill="#2a3f90" />
<path d="M29.5,451.5 L35.0,454.2 L35.0,461.6 L29.5,464.5 L24.0,461.6 L24.0,454.2 Z" fill="#b0b0b0" stroke="#9c9c9c" stroke-width="1"/>
<path d="M29.5,452.5 L34.3,454.7 L29.5,457.2 L24.7,454.7 Z" fill="#ececec"/>
<path d="M24.7,455.4 L29.1,457.8 L29.1,463.6 L24.7,461.2 Z" fill="#cacaca"/>
<path d="M34.3,455.4 L29.9,457.8 L29.9,463.6 L34.3,461.2 Z" fill="#a6a6a6"/>
<text x="41" y="463" font-family="Liberation Sans" font-size="12" fill="#000" font-weight="normal" text-anchor="start" textLength="65.5" lengthAdjust="spacingAndGlyphs" >Load Torque</text>
<rect x="16" y="476" width="1" height="1" fill="#8c8c8c" />
<rect x="18" y="476" width="1" height="1" fill="#8c8c8c" />
<rect x="20" y="476" width="1" height="1" fill="#8c8c8c" />
<rect x="6.5" y="472.5" width="8" height="8" rx="1" fill="#f4f4f4" stroke="#8e8f8f" stroke-width="1"/>
<rect x="8" y="476" width="5" height="1" fill="#2a3f90" />
<rect x="10" y="474" width="1" height="5" fill="#2a3f90" />
<path d="M29.5,469.5 L35.0,472.2 L35.0,479.6 L29.5,482.5 L24.0,479.6 L24.0,472.2 Z" fill="#b0b0b0" stroke="#9c9c9c" stroke-width="1"/>
<path d="M29.5,470.5 L34.3,472.7 L29.5,475.2 L24.7,472.7 Z" fill="#ececec"/>
<path d="M24.7,473.4 L29.1,475.8 L29.1,481.6 L24.7,479.2 Z" fill="#cacaca"/>
<path d="M34.3,473.4 L29.9,475.8 L29.9,481.6 L34.3,479.2 Z" fill="#a6a6a6"/>
<text x="41" y="481" font-family="Liberation Sans" font-size="12" fill="#000" font-weight="normal" text-anchor="start" textLength="70.3" lengthAdjust="spacingAndGlyphs" >MRRef Motor</text>
<rect x="16" y="494" width="1" height="1" fill="#8c8c8c" />
<rect x="18" y="494" width="1" height="1" fill="#8c8c8c" />
<rect x="20" y="494" width="1" height="1" fill="#8c8c8c" />
<rect x="6.5" y="490.5" width="8" height="8" rx="1" fill="#f4f4f4" stroke="#8e8f8f" stroke-width="1"/>
<rect x="8" y="494" width="5" height="1" fill="#2a3f90" />
<rect x="10" y="492" width="1" height="5" fill="#2a3f90" />
<path d="M29.5,487.5 L35.0,490.2 L35.0,497.6 L29.5,500.5 L24.0,497.6 L24.0,490.2 Z" fill="#b0b0b0" stroke="#9c9c9c" stroke-width="1"/>
<path d="M29.5,488.5 L34.3,490.7 L29.5,493.2 L24.7,490.7 Z" fill="#ececec"/>
<path d="M24.7,491.4 L29.1,493.8 L29.1,499.6 L24.7,497.2 Z" fill="#cacaca"/>
<path d="M34.3,491.4 L29.9,493.8 L29.9,499.6 L34.3,497.2 Z" fill="#a6a6a6"/>
<text x="41" y="499" font-family="Liberation Sans" font-size="12" fill="#000" font-weight="normal" text-anchor="start" textLength="74.2" lengthAdjust="spacingAndGlyphs" >MRRef Torque</text>
<rect x="16" y="512" width="1" height="1" fill="#8c8c8c" />
<rect x="18" y="512" width="1" height="1" fill="#8c8c8c" />
<rect x="20" y="512" width="1" height="1" fill="#8c8c8c" />
<rect x="6.5" y="508.5" width="8" height="8" rx="1" fill="#f4f4f4" stroke="#8e8f8f" stroke-width="1"/>
<rect x="8" y="512" width="5" height="1" fill="#2a3f90" />
<rect x="10" y="510" width="1" height="5" fill="#2a3f90" />
<path d="M29.5,505.5 L35.0,508.2 L35.0,515.6 L29.5,518.5 L24.0,515.6 L24.0,508.2 Z" fill="#b0b0b0" stroke="#9c9c9c" stroke-width="1"/>
<path d="M29.5,506.5 L34.3,508.7 L29.5,511.2 L24.7,508.7 Z" fill="#ececec"/>
<path d="M24.7,509.4 L29.1,511.8 L29.1,517.6 L24.7,515.2 Z" fill="#cacaca"/>
<path d="M34.3,509.4 L29.9,511.8 L29.9,517.6 L34.3,515.2 Z" fill="#a6a6a6"/>
<text x="41" y="517" font-family="Liberation Sans" font-size="12" fill="#000" font-weight="normal" text-anchor="start" textLength="40.1" lengthAdjust="spacingAndGlyphs" >Sensing</text>
<text x="9.5" y="625.5" font-family="Liberation Sans" font-size="12" fill="#000" font-weight="normal" text-anchor="start" textLength="142.3" lengthAdjust="spacingAndGlyphs" >Statistics for selected node:</text>
<text x="9.5" y="641.5" font-family="Liberation Sans" font-size="12" fill="#000" font-weight="normal" text-anchor="start" textLength="62.5" lengthAdjust="spacingAndGlyphs" >Description:</text>
<text x="75" y="641.5" font-family="Liberation Sans" font-size="12" fill="#0000ee" font-weight="normal" text-anchor="start" textLength="98.8" lengthAdjust="spacingAndGlyphs" >Rotational velocity</text>
<rect x="75" y="642.1" width="98.8" height="1" fill="#0000ee" />
<text x="9.5" y="657.5" font-family="Liberation Sans" font-size="12" fill="#000" font-weight="normal" text-anchor="start" textLength="133.5" lengthAdjust="spacingAndGlyphs" >Unit conversion: absolute</text>
<text x="9.5" y="673.5" font-family="Liberation Sans" font-size="12" fill="#000" font-weight="normal" text-anchor="start" textLength="139" lengthAdjust="spacingAndGlyphs" >Number of time steps: 112</text>
<text x="9.5" y="689.5" font-family="Liberation Sans" font-size="12" fill="#000" font-weight="normal" text-anchor="start" textLength="158.2" lengthAdjust="spacingAndGlyphs" >Number of logged variables: 1</text>
<text x="9.5" y="705.5" font-family="Liberation Sans" font-size="12" fill="#000" font-weight="normal" text-anchor="start" textLength="220.9" lengthAdjust="spacingAndGlyphs" >Number of logged zero crossing signals: 0</text>
<text x="9.5" y="721.5" font-family="Liberation Sans" font-size="12" fill="#000" font-weight="normal" text-anchor="start" textLength="37.8" lengthAdjust="spacingAndGlyphs" >Source:</text>
<text x="51.4" y="721.5" font-family="Liberation Sans" font-size="12" fill="#0000ee" font-weight="normal" text-anchor="start" textLength="209" lengthAdjust="spacingAndGlyphs" >Rotational Electromechanical Converter</text>
<rect x="51.4" y="722.1" width="209" height="1" fill="#0000ee" />
<rect x="416" y="134" width="503" height="529" fill="#ffffff" />
<path d="M466.5,134.5 L466.5,662.5 M516.5,134.5 L516.5,662.5 M566.5,134.5 L566.5,662.5 M617.5,134.5 L617.5,662.5 M667.5,134.5 L667.5,662.5 M717.5,134.5 L717.5,662.5 M768.5,134.5 L768.5,662.5 M818.5,134.5 L818.5,662.5 M868.5,134.5 L868.5,662.5 M416.5,557.5 L918.5,557.5 M416.5,451.5 L918.5,451.5 M416.5,345.5 L918.5,345.5 M416.5,239.5 L918.5,239.5" stroke="#dfdfdf" stroke-width="1" fill="none"/>
<path d="M416.50,662.50 L417.50,641.46 L418.51,621.45 L419.51,602.44 L420.52,584.36 L421.52,567.18 L422.52,550.84 L423.53,535.31 L424.53,520.55 L425.54,506.51 L426.54,493.17 L427.54,480.49 L428.55,468.43 L429.55,456.97 L430.56,446.08 L431.56,435.72 L432.56,425.87 L433.57,416.51 L434.57,407.62 L435.58,399.16 L436.58,391.12 L437.58,383.47 L438.59,376.21 L439.59,369.30 L440.60,362.73 L441.60,356.49 L442.60,350.56 L443.61,344.91 L444.61,339.55 L445.62,334.45 L446.62,329.61 L447.62,325.00 L448.63,320.62 L449.63,316.46 L450.64,312.50 L451.64,308.74 L452.64,305.16 L453.65,301.76 L454.65,298.53 L455.66,295.46 L456.66,292.54 L457.66,289.76 L458.67,287.12 L459.67,284.61 L460.68,282.23 L461.68,279.96 L462.68,277.80 L463.69,275.75 L464.69,273.81 L465.70,271.95 L466.70,270.19 L467.70,268.52 L468.71,266.93 L469.71,265.42 L470.72,263.98 L471.72,262.61 L472.72,261.31 L473.73,260.08 L474.73,258.90 L475.74,257.79 L476.74,256.73 L477.74,255.72 L478.75,254.76 L479.75,253.85 L480.76,252.98 L481.76,252.16 L482.76,251.37 L483.77,250.63 L484.77,249.92 L485.78,249.25 L486.78,248.61 L487.78,248.00 L488.79,247.43 L489.79,246.88 L490.80,246.35 L491.80,245.86 L492.80,245.39 L493.81,244.94 L494.81,244.51 L495.82,244.10 L496.82,243.72 L497.82,243.35 L498.83,243.00 L499.83,242.67 L500.84,242.36 L501.84,242.06 L502.84,241.77 L503.85,241.50 L504.85,241.25 L505.86,241.00 L506.86,240.77 L507.86,240.55 L508.87,240.34 L509.87,240.14 L510.88,239.95 L511.88,239.77 L512.88,239.60 L513.89,239.44 L514.89,239.28 L515.90,239.13 L516.90,238.99 L517.90,238.86 L518.91,238.73 L519.91,238.61 L520.92,238.50 L521.92,238.39 L522.92,238.29 L523.93,238.19 L524.93,238.10 L525.94,238.01 L526.94,237.92 L527.94,237.84 L528.95,237.77 L529.95,237.69 L530.96,237.63 L531.96,237.56 L532.96,237.50 L533.97,237.44 L534.97,237.38 L535.98,237.33 L536.98,237.28 L537.98,237.23 L538.99,237.18 L539.99,237.14 L541.00,237.10 L542.00,237.06 L543.00,237.02 L544.01,236.99 L545.01,236.95 L546.02,236.92 L547.02,236.89 L548.02,236.86 L549.03,236.83 L550.03,236.81 L551.04,236.78 L552.04,236.76 L553.04,236.73 L554.05,236.71 L555.05,236.69 L556.06,236.67 L557.06,236.65 L558.06,236.64 L559.07,236.62 L560.07,236.60 L561.08,236.59 L562.08,236.57 L563.08,236.56 L564.09,236.55 L565.09,236.54 L566.10,236.52 L567.10,236.51 L568.10,236.50 L569.11,236.49 L570.11,236.48 L571.12,236.47 L572.12,236.46 L573.12,236.46 L574.13,236.45 L575.13,236.44 L576.14,236.43 L577.14,236.43 L578.14,236.42 L579.15,236.42 L580.15,236.41 L581.16,236.40 L582.16,236.40 L583.16,236.39 L584.17,236.39 L585.17,236.38 L586.18,236.38 L587.18,236.38 L588.18,236.37 L589.19,236.37 L590.19,236.37 L591.20,236.36 L592.20,236.36 L593.20,236.36 L594.21,236.35 L595.21,236.35 L596.22,236.35 L597.22,236.35 L598.22,236.34 L599.23,236.34 L600.23,236.34 L601.24,236.34 L602.24,236.33 L603.24,236.33 L604.25,236.33 L605.25,236.33 L606.26,236.33 L607.26,236.33 L608.26,236.33 L609.27,236.32 L610.27,236.32 L611.28,236.32 L612.28,236.32 L613.28,236.32 L614.29,236.32 L615.29,236.32 L616.30,236.32 L617.30,236.32 L618.30,236.31 L619.31,236.31 L620.31,236.31 L621.32,236.31 L622.32,236.31 L623.32,236.31 L624.33,236.31 L625.33,236.31 L626.34,236.31 L627.34,236.31 L628.34,236.31 L629.35,236.31 L630.35,236.31 L631.36,236.31 L632.36,236.31 L633.36,236.31 L634.37,236.31 L635.37,236.31 L636.38,236.30 L637.38,236.30 L638.38,236.30 L639.39,236.30 L640.39,236.30 L641.40,236.30 L642.40,236.30 L643.40,236.30 L644.41,236.30 L645.41,236.30 L646.42,236.30 L647.42,236.30 L648.42,236.30 L649.43,236.30 L650.43,236.30 L651.44,236.30 L652.44,236.30 L653.44,236.30 L654.45,236.30 L655.45,236.30 L656.46,236.30 L657.46,236.30 L658.46,236.30 L659.47,236.30 L660.47,236.30 L661.48,236.30 L662.48,236.30 L663.48,236.30 L664.49,236.30 L665.49,236.30 L666.50,236.30 L667.50,236.30 L668.50,256.02 L669.51,274.82 L670.51,292.73 L671.52,309.80 L672.52,326.07 L673.52,341.57 L674.53,356.34 L675.53,370.42 L676.54,383.83 L677.54,396.62 L678.54,408.80 L679.55,420.41 L680.55,431.47 L681.56,442.01 L682.56,452.06 L683.56,461.63 L684.57,470.75 L685.57,479.45 L686.58,487.73 L687.58,495.63 L688.58,503.15 L689.59,510.32 L690.59,517.15 L691.60,523.66 L692.60,529.87 L693.60,535.78 L694.61,541.41 L695.61,546.78 L696.62,551.90 L697.62,556.78 L698.62,561.42 L699.63,565.85 L700.63,570.07 L701.64,574.09 L702.64,577.92 L703.64,581.57 L704.65,585.05 L705.65,588.37 L706.66,591.53 L707.66,594.54 L708.66,597.41 L709.67,600.14 L710.67,602.75 L711.68,605.23 L712.68,607.60 L713.68,609.86 L714.69,612.00 L715.69,614.05 L716.70,616.00 L717.70,617.86 L718.70,619.64 L719.71,621.32 L720.71,622.93 L721.72,624.47 L722.72,625.93 L723.72,627.32 L724.73,628.65 L725.73,629.91 L726.74,631.12 L727.74,632.27 L728.74,633.36 L729.75,634.41 L730.75,635.40 L731.76,636.35 L732.76,637.25 L733.76,638.11 L734.77,638.93 L735.77,639.71 L736.78,640.45 L737.78,641.16 L738.78,641.84 L739.79,642.48 L740.79,643.10 L741.80,643.68 L742.80,644.24 L743.80,644.77 L744.81,645.28 L745.81,645.76 L746.82,646.22 L747.82,646.66 L748.82,647.07 L749.83,647.47 L750.83,647.85 L751.84,648.21 L752.84,648.56 L753.84,648.89 L754.85,649.20 L755.85,649.50 L756.86,649.78 L757.86,650.05 L758.86,650.31 L759.87,650.55 L760.87,650.79 L761.88,651.01 L762.88,651.22 L763.88,651.43 L764.89,651.62 L765.89,651.80 L766.90,651.98 L767.90,652.15 L768.90,652.31 L769.91,652.46 L770.91,652.60 L771.92,652.74 L772.92,652.87 L773.92,653.00 L774.93,653.12 L775.93,653.23 L776.94,653.34 L777.94,653.44 L778.94,653.54 L779.95,653.63 L780.95,653.72 L781.96,653.81 L782.96,653.89 L783.96,653.97 L784.97,654.04 L785.97,654.11 L786.98,654.18 L787.98,654.24 L788.98,654.30 L789.99,654.36 L790.99,654.41 L792.00,654.47 L793.00,654.52 L794.00,654.56 L795.01,654.61 L796.01,654.65 L797.02,654.69 L798.02,654.73 L799.02,654.77 L800.03,654.81 L801.03,654.84 L802.04,654.87 L803.04,654.90 L804.04,654.93 L805.05,654.96 L806.05,654.99 L807.06,655.01 L808.06,655.04 L809.06,655.06 L810.07,655.08 L811.07,655.10 L812.08,655.12 L813.08,655.14 L814.08,655.16 L815.09,655.18 L816.09,655.20 L817.10,655.21 L818.10,655.23 L819.10,655.24 L820.11,655.25 L821.11,655.27 L822.12,655.28 L823.12,655.29 L824.12,655.30 L825.13,655.31 L826.13,655.32 L827.14,655.33 L828.14,655.34 L829.14,655.35 L830.15,655.36 L831.15,655.37 L832.16,655.38 L833.16,655.38 L834.16,655.39 L835.17,655.40 L836.17,655.40 L837.18,655.41 L838.18,655.41 L839.18,655.42 L840.19,655.43 L841.19,655.43 L842.20,655.43 L843.20,655.44 L844.20,655.44 L845.21,655.45 L846.21,655.45 L847.22,655.46 L848.22,655.46 L849.22,655.46 L850.23,655.47 L851.23,655.47 L852.24,655.47 L853.24,655.47 L854.24,655.48 L855.25,655.48 L856.25,655.48 L857.26,655.48 L858.26,655.49 L859.26,655.49 L860.27,655.49 L861.27,655.49 L862.28,655.49 L863.28,655.50 L864.28,655.50 L865.29,655.50 L866.29,655.50 L867.30,655.50 L868.30,655.50 L869.30,655.50 L870.31,655.51 L871.31,655.51 L872.32,655.51 L873.32,655.51 L874.32,655.51 L875.33,655.51 L876.33,655.51 L877.34,655.51 L878.34,655.51 L879.34,655.51 L880.35,655.52 L881.35,655.52 L882.36,655.52 L883.36,655.52 L884.36,655.52 L885.37,655.52 L886.37,655.52 L887.38,655.52 L888.38,655.52 L889.38,655.52 L890.39,655.52 L891.39,655.52 L892.40,655.52 L893.40,655.52 L894.40,655.52 L895.41,655.52 L896.41,655.52 L897.42,655.52 L898.42,655.52 L899.42,655.52 L900.43,655.52 L901.43,655.52 L902.44,655.53 L903.44,655.53 L904.44,655.53 L905.45,655.53 L906.45,655.53 L907.46,655.53 L908.46,655.53 L909.46,655.53 L910.47,655.53 L911.47,655.53 L912.48,655.53 L913.48,655.53 L914.48,655.53 L915.49,655.53 L916.49,655.53 L917.50,655.53 L918.50,655.53" stroke="#1a7cc4" stroke-width="1.25" fill="none" stroke-linejoin="round"/>
<path d="M416.5,662.5 L416.5,657.0 M416.5,134.5 L416.5,140.0 M466.5,662.5 L466.5,657.0 M466.5,134.5 L466.5,140.0 M516.5,662.5 L516.5,657.0 M516.5,134.5 L516.5,140.0 M566.5,662.5 L566.5,657.0 M566.5,134.5 L566.5,140.0 M617.5,662.5 L617.5,657.0 M617.5,134.5 L617.5,140.0 M667.5,662.5 L667.5,657.0 M667.5,134.5 L667.5,140.0 M717.5,662.5 L717.5,657.0 M717.5,134.5 L717.5,140.0 M768.5,662.5 L768.5,657.0 M768.5,134.5 L768.5,140.0 M818.5,662.5 L818.5,657.0 M818.5,134.5 L818.5,140.0 M868.5,662.5 L868.5,657.0 M868.5,134.5 L868.5,140.0 M918.5,662.5 L918.5,657.0 M918.5,134.5 L918.5,140.0 M416.5,662.5 L422.0,662.5 M918.5,662.5 L913.0,662.5 M416.5,557.5 L422.0,557.5 M918.5,557.5 L913.0,557.5 M416.5,451.5 L422.0,451.5 M918.5,451.5 L913.0,451.5 M416.5,345.5 L422.0,345.5 M918.5,345.5 L913.0,345.5 M416.5,239.5 L422.0,239.5 M918.5,239.5 L913.0,239.5 M416.5,134.5 L422.0,134.5 M918.5,134.5 L913.0,134.5" stroke="#262626" stroke-width="1" fill="none"/>
<rect x="416.5" y="134.5" width="502.0" height="528.0" fill="none" stroke="#262626" stroke-width="1"/>
<text x="416.1" y="682" font-family="Liberation Sans" font-size="13.33" fill="#262626" font-weight="normal" text-anchor="middle" >0</text>
<text x="466.1" y="682" font-family="Liberation Sans" font-size="13.33" fill="#262626" font-weight="normal" text-anchor="middle" >0.02</text>
<text x="516.1" y="682" font-family="Liberation Sans" font-size="13.33" fill="#262626" font-weight="normal" text-anchor="middle" >0.04</text>
<text x="566.1" y="682" font-family="Liberation Sans" font-size="13.33" fill="#262626" font-weight="normal" text-anchor="middle" >0.06</text>
<text x="617.1" y="682" font-family="Liberation Sans" font-size="13.33" fill="#262626" font-weight="normal" text-anchor="middle" >0.08</text>
<text x="667.1" y="682" font-family="Liberation Sans" font-size="13.33" fill="#262626" font-weight="normal" text-anchor="middle" >0.1</text>
<text x="717.1" y="682" font-family="Liberation Sans" font-size="13.33" fill="#262626" font-weight="normal" text-anchor="middle" >0.12</text>
<text x="768.1" y="682" font-family="Liberation Sans" font-size="13.33" fill="#262626" font-weight="normal" text-anchor="middle" >0.14</text>
<text x="818.1" y="682" font-family="Liberation Sans" font-size="13.33" fill="#262626" font-weight="normal" text-anchor="middle" >0.16</text>
<text x="868.1" y="682" font-family="Liberation Sans" font-size="13.33" fill="#262626" font-weight="normal" text-anchor="middle" >0.18</text>
<text x="918.1" y="682" font-family="Liberation Sans" font-size="13.33" fill="#262626" font-weight="normal" text-anchor="middle" >0.2</text>
<text x="410.3" y="668.3" font-family="Liberation Sans" font-size="13.33" fill="#262626" font-weight="normal" text-anchor="end" >0</text>
<text x="410.3" y="563.3" font-family="Liberation Sans" font-size="13.33" fill="#262626" font-weight="normal" text-anchor="end" >500</text>
<text x="410.3" y="457.3" font-family="Liberation Sans" font-size="13.33" fill="#262626" font-weight="normal" text-anchor="end" >1000</text>
<text x="410.3" y="351.3" font-family="Liberation Sans" font-size="13.33" fill="#262626" font-weight="normal" text-anchor="end" >1500</text>
<text x="410.3" y="245.3" font-family="Liberation Sans" font-size="13.33" fill="#262626" font-weight="normal" text-anchor="end" >2000</text>
<text x="410.3" y="140.3" font-family="Liberation Sans" font-size="13.33" fill="#262626" font-weight="normal" text-anchor="end" >2500</text>
<text x="668" y="127" font-family="Liberation Sans" font-size="14.67" fill="#000" font-weight="bold" text-anchor="middle" >w</text>
<text x="668" y="702" font-family="Liberation Sans" font-size="14.67" fill="#262626" font-weight="normal" text-anchor="middle" >Time (s)</text>
<text x="0" y="0" font-family="Liberation Sans" font-size="14.67" fill="#262626" text-anchor="middle" transform="translate(373,398) rotate(-90)">rad/s</text>
<rect x="363.5" y="418.5" width="10" height="10" fill="#fff" stroke="#a8a8a8" stroke-width="1"/>
<path d="M365.5,421.5 L371.5,421.5 L368.5,425 Z" fill="#000"/>
<rect x="0" y="0" width="982" height="1" fill="#78b6f4" />
<rect x="0" y="735" width="982" height="1" fill="#78b6f4" />
<rect x="0" y="0" width="1" height="736" fill="#78b6f4" />
<rect x="981" y="0" width="1" height="736" fill="#78b6f4" />
</svg>
</body></html>
